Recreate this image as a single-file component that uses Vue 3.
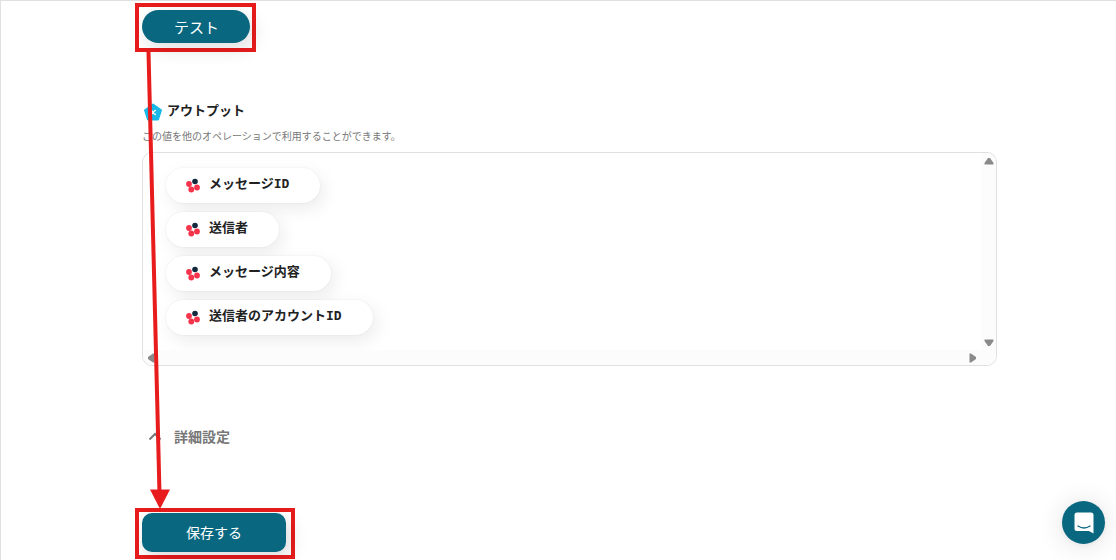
<script setup>
const outputs = ['メッセージID', '送信者', 'メッセージ内容', '送信者のアカウントID']
</script>

<template>
  <div class="page">
    <main class="content">
      <span class="mark mark-test"><button class="btn pill" type="button">テスト</button></span>

      <section class="output">
        <h2 class="title">
          <svg width="20" height="18" viewBox="0 0 20 18" aria-hidden="true">
            <path d="M11 1.500 19 7.300 16 16.500H6L3 7.300Z" fill="#18b9e8" stroke="#18b9e8" stroke-width="2" stroke-linejoin="round" />
            <path d="M8.500 7.500C11 7 11 12 14 11.500M14 7.500C11.500 7 11 12 8.500 11.500" fill="none" stroke="#fff" stroke-width="1.300" />
          </svg>
          アウトプット
        </h2>
        <p class="note">この値を他のオペレーションで利用することができます。</p>
        <div class="panel">
          <ul class="chips">
            <li v-for="name in outputs" :key="name" class="chip">
              <svg width="16" height="16" viewBox="0 0 16 16" aria-hidden="true">
                <circle cx="10" cy="3.500" r="2.800" fill="#13293d" />
                <circle cx="4" cy="6" r="2.900" fill="#f5344b" />
                <circle cx="12" cy="9.500" r="2.900" fill="#f5344b" />
                <circle cx="6.300" cy="11.500" r="2.900" fill="#f5344b" />
              </svg>
              <span>{{ name }}</span>
            </li>
          </ul>
          <div class="bar vertical">
            <svg width="10" height="8" viewBox="0 0 10 8"><path d="M4 1H6L9.500 6V7.500H.5V6Z" /></svg>
            <svg width="10" height="8" viewBox="0 0 10 8"><path d="M.5.5H9.500V2L6 7H4L.5 2Z" /></svg>
          </div>
          <div class="bar horizontal">
            <svg width="8" height="10" viewBox="0 0 8 10"><path d="M1 4V6L6 9.500H7.500V.5H6Z" /></svg>
            <svg width="8" height="10" viewBox="0 0 8 10"><path d="M.5.5H2L7 4V6L2 9.500H.5Z" /></svg>
          </div>
        </div>
      </section>

      <button class="details" type="button">
        <svg width="14" height="10" viewBox="0 0 14 10" aria-hidden="true">
          <path d="M1.500 8.500 7 3 12.500 8.500" fill="none" stroke="#777" stroke-width="2" />
        </svg>
        詳細設定
      </button>

      <span class="mark mark-save"><button class="btn save" type="button">保存する</button></span>

      <svg class="arrow" width="30" height="458" viewBox="0 0 30 458" aria-hidden="true">
        <path d="M8.500 1 19.500 442" stroke="#e81c1c" stroke-width="4" />
        <path d="M10 438.500H30L20 458Z" fill="#e81c1c" />
      </svg>
    </main>

    <button class="chat" type="button" aria-label="チャットを開く">
      <svg width="20" height="22" viewBox="0 0 20 22" aria-hidden="true">
        <path d="M3 .5H17Q19.500.5 19.500 3V21.500L15 19H3Q.5 19 .5 16.500V3Q.5.5 3 .5Z" fill="#fff" />
        <path d="M4 14Q10 18 16 14" fill="none" stroke="#096780" stroke-width="1.300" stroke-linecap="round" />
      </svg>
    </button>
  </div>
</template>

<style>
body {
  background: #fff;
}
</style>

<style scoped>
.page {
  box-sizing: border-box;
  min-height: 100vh;
  border-top: 1px solid #e0e0e0;
  border-left: 1px solid #e0e0e0;
  font-family: "Noto Sans CJK JP", sans-serif;
  color: #222;
}
.content {
  position: relative;
  display: flex;
  flex-direction: column;
  align-items: flex-start;
  margin: 0 119px 0 134px;
  padding-top: 2px;
}
.mark {
  display: flex;
  border: 4px solid #e81c1c;
}
.mark-test {
  padding: 3px 2px 5px 3px;
}
.mark-save {
  padding: 1px 5px 3px 3px;
}
.btn {
  border: 0;
  background: #096780;
  color: #fff;
  font-family: inherit;
}
.pill {
  height: 33px;
  padding: 0 31px 0 32px;
  border-radius: 17px;
  font-size: 15px;
  box-shadow: 4px 6px 18px rgba(0, 0, 0, 0.13);
}
.save {
  height: 39px;
  padding: 0 44px 2px;
  border-radius: 10px;
  font-size: 14px;
  box-shadow: 4px 6px 18px rgba(0, 0, 0, 0.15);
}
.output {
  align-self: stretch;
  margin: 48px 0 0 7px;
}
.title {
  display: flex;
  align-items: center;
  gap: 5px;
  height: 20px;
  margin: 0;
  font-size: 13px;
  line-height: 20px;
  font-weight: 700;
}
.title svg {
  margin-top: 4px;
}
.note {
  margin: 8px 0;
  font-size: 10px;
  line-height: 16px;
  color: #777;
}
.panel {
  display: grid;
  grid-template-columns: 1fr 15px;
  grid-template-rows: auto 15px;
  overflow: hidden;
  border: 1px solid #e0e0e0;
  border-radius: 10px;
}
.chips {
  display: flex;
  flex-direction: column;
  align-items: flex-start;
  gap: 9px;
  margin: 0;
  padding: 15px 23px;
  list-style: none;
}
.chip {
  display: flex;
  align-items: center;
  gap: 8px;
  height: 35px;
  padding: 0 31px 0 19px;
  border-radius: 18px;
  background: #fff;
  box-shadow: 4px 6px 18px rgba(0, 0, 0, 0.08), 0 0 2px rgba(0, 0, 0, 0.08);
  font-family: "DejaVu Sans Mono", "Noto Sans CJK JP", sans-serif;
  font-size: 13px;
  line-height: 20px;
  font-weight: 700;
}
.chip span {
  padding-bottom: 3px;
}
.bar {
  display: flex;
  align-items: center;
  justify-content: space-between;
  background: #fcfcfc;
  fill: #8a8a8a;
}
.vertical {
  flex-direction: column;
  padding: 4px 0 3px;
}
.horizontal {
  grid-column: 1 / -1;
  padding: 0 19px 0 4px;
}
.details {
  display: flex;
  align-items: center;
  gap: 12px;
  margin: 59px 0 0 13px;
  padding: 0;
  border: 0;
  background: none;
  color: #777;
  font-family: inherit;
  font-size: 14px;
  line-height: 22px;
  font-weight: 700;
}
.mark-save {
  margin-top: 61px;
}
.arrow {
  position: absolute;
  top: 50px;
  left: 5px;
}
.chat {
  position: fixed;
  right: 11px;
  bottom: 16px;
  display: flex;
  align-items: center;
  justify-content: center;
  width: 43px;
  height: 43px;
  padding: 0;
  border: 0;
  border-radius: 50%;
  background: #096780;
  box-shadow: 0 1px 6px rgba(0, 0, 0, 0.06), 0 2px 28px rgba(0, 0, 0, 0.12);
}
</style>
